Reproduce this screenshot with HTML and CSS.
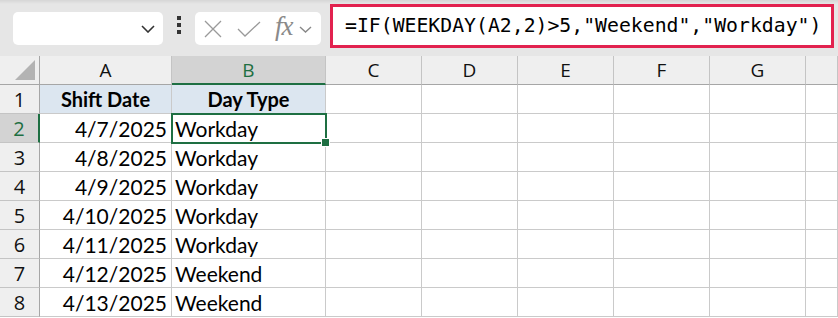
FILE: index.html
```html
<!DOCTYPE html>
<html lang="en">
<head>
  <meta charset="UTF-8" />
  <title>Shift Day Type</title>
  <link rel="stylesheet" href="styles.css">
</head>
<body>

  <!-- Formula bar -->
  <div class="toolbar">
    <div class="name-box">
      <svg class="chev" width="14" height="8" viewBox="0 0 14 8"><path d="M1 1l6 6 6-6" fill="none" stroke="#333" stroke-width="1.6"/></svg>
    </div>
    <div class="dots"><span></span><span></span><span></span></div>
    <div class="fx-box">
      <svg class="icon" width="18" height="18" viewBox="0 0 18 18"><path d="M1 1l16 16M17 1L1 17" fill="none" stroke="#9a9a9a" stroke-width="1.3"/></svg>
      <svg class="icon" width="24" height="16" viewBox="0 0 24 16"><path d="M1 8l7 7L23 1" fill="none" stroke="#9a9a9a" stroke-width="1.3"/></svg>
      <span class="fx">fx</span>
      <svg class="icon small" width="13" height="7" viewBox="0 0 13 7"><path d="M1 1l5.5 5 5.5-5" fill="none" stroke="#888" stroke-width="1.4"/></svg>
    </div>
    <div class="formula">=IF(WEEKDAY(A2,2)&gt;5,"Weekend","Workday")</div>
  </div>

  <!-- Sheet -->
  <div class="sheet">
    <div class="hd corner"><span class="tri"></span></div>
    <div class="hd">A</div>
    <div class="hd sel-col">B</div>
    <div class="hd">C</div>
    <div class="hd">D</div>
    <div class="hd">E</div>
    <div class="hd">F</div>
    <div class="hd">G</div>
    <div class="hd"></div>

    <div class="rh">1</div>
    <div class="c title">Shift Date</div>
    <div class="c title">Day Type</div>
    <div class="c"></div><div class="c"></div><div class="c"></div><div class="c"></div><div class="c"></div><div class="c"></div>

    <div class="rh sel-row">2</div>
    <div class="c num">4/7/2025</div>
    <div class="c active">Workday<span class="handle"></span></div>
    <div class="c"></div><div class="c"></div><div class="c"></div><div class="c"></div><div class="c"></div><div class="c"></div>

    <div class="rh">3</div>
    <div class="c num">4/8/2025</div>
    <div class="c">Workday</div>
    <div class="c"></div><div class="c"></div><div class="c"></div><div class="c"></div><div class="c"></div><div class="c"></div>

    <div class="rh">4</div>
    <div class="c num">4/9/2025</div>
    <div class="c">Workday</div>
    <div class="c"></div><div class="c"></div><div class="c"></div><div class="c"></div><div class="c"></div><div class="c"></div>

    <div class="rh">5</div>
    <div class="c num">4/10/2025</div>
    <div class="c">Workday</div>
    <div class="c"></div><div class="c"></div><div class="c"></div><div class="c"></div><div class="c"></div><div class="c"></div>

    <div class="rh">6</div>
    <div class="c num">4/11/2025</div>
    <div class="c">Workday</div>
    <div class="c"></div><div class="c"></div><div class="c"></div><div class="c"></div><div class="c"></div><div class="c"></div>

    <div class="rh">7</div>
    <div class="c num">4/12/2025</div>
    <div class="c">Weekend</div>
    <div class="c"></div><div class="c"></div><div class="c"></div><div class="c"></div><div class="c"></div><div class="c"></div>

    <div class="rh">8</div>
    <div class="c num">4/13/2025</div>
    <div class="c">Weekend</div>
    <div class="c"></div><div class="c"></div><div class="c"></div><div class="c"></div><div class="c"></div><div class="c"></div>
  </div>

</body>
</html>
```

FILE: styles.css
```css
* {
  margin: 0;
  padding: 0;
  box-sizing: border-box;
}

body {
  width: 838px;
  height: 318px;
  overflow: hidden;
  background: #fff;
  font-family: Lato, "Noto Sans", sans-serif;
  color: #000;
}

/* formula bar */
.toolbar {
  height: 56px;
  background: linear-gradient(to bottom, #d6d6d6 0, #e6e6e6 4px, #e6e6e6 100%);
  display: flex;
  align-items: flex-start;
  padding: 4px 4px 0 13px;
}

.name-box {
  width: 150px;
  height: 33px;
  margin-top: 8px;
  background: #fff;
  border-radius: 5px;
  display: flex;
  align-items: center;
  justify-content: flex-end;
  padding-right: 8px;
}

.dots {
  width: 32px;
  height: 41px;
  display: flex;
  flex-direction: column;
  align-items: center;
  justify-content: center;
  gap: 3px;
}

.dots span {
  width: 4px;
  height: 4px;
  background: #333;
}

.fx-box {
  width: 126px;
  height: 33px;
  margin-top: 8px;
  background: #fff;
  border-radius: 5px;
  display: flex;
  align-items: center;
  padding-left: 9px;
}

.fx-box .icon {
  margin-right: 15px;
}

.fx-box .icon.small {
  margin: 2px 0 0 0;
}

.fx {
  font-family: "Liberation Serif", serif;
  font-style: italic;
  font-size: 27px;
  color: #8a8a8a;
  margin: -5px 6px 0 -1px;
  letter-spacing: -1px;
}

.formula {
  width: 504px;
  height: 44px;
  margin-left: 9px;
  background: #fff;
  border: 3px solid #e2224f;
  font-family: "DejaVu Sans Mono", monospace;
  font-size: 19.8px;
  line-height: 38px;
  padding-left: 12px;
  white-space: nowrap;
}

/* grid */
.sheet {
  display: grid;
  grid-template-columns: 40px 132px 154px repeat(5, 96px) 1fr;
  grid-auto-rows: 29px;
}

.hd {
  background: #efefef;
  border-right: 1px solid #c4c4c4;
  border-bottom: 1px solid #a6a6a6;
  font-family: "Open Sans", sans-serif;
  font-size: 19px;
  display: flex;
  align-items: center;
  justify-content: center;
  color: #111;
}

.corner {
  position: relative;
  border-right-color: #a6a6a6;
}

.tri {
  position: absolute;
  right: 4px;
  bottom: 4px;
  width: 20px;
  height: 20px;
  background: #b3b3b3;
  clip-path: polygon(100% 0, 100% 100%, 0 100%);
}

.sel-col {
  background: #d3d3d3;
  color: #1e6f42;
  border-bottom: 2px solid #1e6f42;
}

.rh {
  background: #efefef;
  border-right: 1px solid #a6a6a6;
  border-bottom: 1px solid #c4c4c4;
  font-family: "Open Sans", sans-serif;
  font-size: 20px;
  display: flex;
  align-items: center;
  justify-content: center;
  color: #111;
}

.sel-row {
  background: #d3d3d3;
  color: #1e6f42;
  border-right: 2px solid #1e6f42;
}

.c {
  border-right: 1px solid #cacaca;
  border-bottom: 1px solid #cacaca;
  font-size: 21px;
  display: flex;
  align-items: center;
  padding: 0 3px;
  white-space: nowrap;
}

.c.num {
  justify-content: flex-end;
  padding-right: 4px;
}

.c.title {
  background: #dce6f0;
  font-weight: bold;
  font-size: 20px;
  justify-content: center;
}

.c.active {
  position: relative;
  outline: 2px solid #1e6f42;
  outline-offset: -1px;
  z-index: 1;
}

.handle {
  position: absolute;
  right: -5px;
  bottom: -5px;
  width: 7px;
  height: 7px;
  background: #1e6f42;
  border: 1px solid #fff;
  box-sizing: content-box;
}
```
